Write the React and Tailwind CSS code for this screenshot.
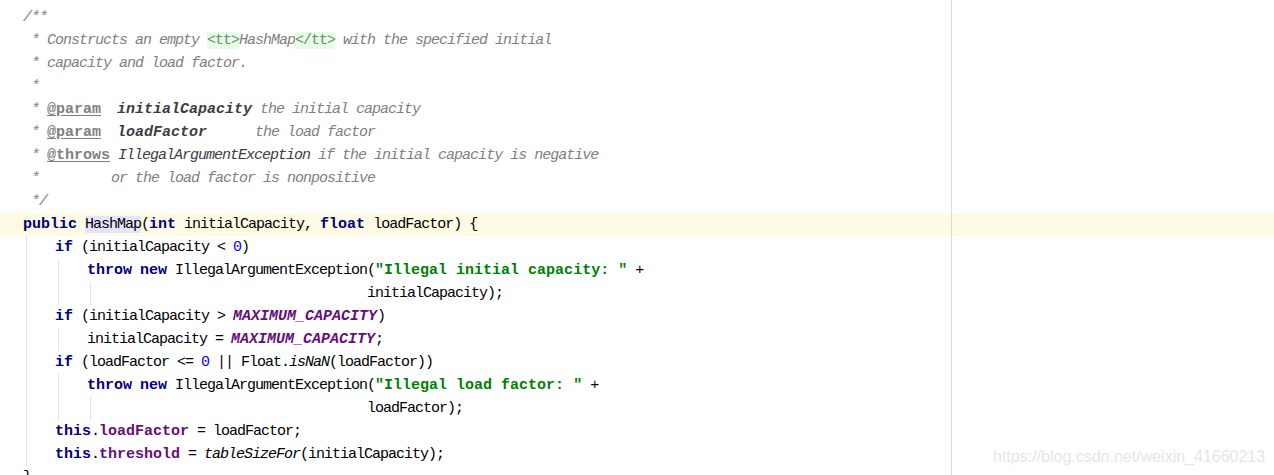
import React from 'react';

// token styles, IntelliJ default light scheme
const kw = 'font-bold tracking-[0px] text-[#000080]';
const str = 'font-bold tracking-[0px] text-[#008000]';
const num = 'text-[#0000ff]';
const konst = 'font-bold italic tracking-[0px] text-[#660e7a]';
const field = 'font-bold tracking-[0px] text-[#660e7a]';
const it = 'italic';
const cm = 'italic text-[#808080]';
const tag = 'font-bold tracking-[0px] underline underline-offset-2 text-[#808080]';
const tagVal = 'font-bold italic tracking-[0px] text-[#3d3d3d]';
const tagRef = 'italic text-[#3d3d3d]';
const markup = 'text-[#808080] bg-[#e2ffe2]';
const usage = 'bg-[#e4e4ff]';

const lines = [
  { toks: [['/**', cm]] },
  { toks: [[' * Constructs an empty ', cm], ['<tt>', markup], ['HashMap', cm], ['</tt>', markup], [' with the specified initial', cm]] },
  { toks: [[' * capacity and load factor.', cm]] },
  { toks: [[' *', cm]] },
  { toks: [[' * ', cm], ['@param', tag], ['  ', cm], ['initialCapacity', tagVal], [' the initial capacity', cm]] },
  { toks: [[' * ', cm], ['@param', tag], ['  ', cm], ['loadFactor', tagVal], ['      the load factor', cm]] },
  { toks: [[' * ', cm], ['@throws', tag], [' ', cm], ['IllegalArgumentException', tagRef], [' if the initial capacity is negative', cm]] },
  { toks: [[' *         or the load factor is nonpositive', cm]] },
  { toks: [[' */', cm]] },
  { current: true, toks: [['public', kw], [' '], ['HashMap', usage], ['('], ['int', kw], [' initialCapacity, '], ['float', kw], [' loadFactor) {']] },
  { guides: 1, toks: [['if', kw], [' (initialCapacity < '], ['0', num], [')']] },
  { guides: 2, toks: [['throw', kw], [' '], ['new', kw], [' IllegalArgumentException('], ['"Illegal initial capacity: "', str], [' +']] },
  { guides: 3, pad: 31, toks: [['initialCapacity);']] },
  { guides: 1, toks: [['if', kw], [' (initialCapacity > '], ['MAXIMUM_CAPACITY', konst], [')']] },
  { guides: 2, toks: [['initialCapacity = '], ['MAXIMUM_CAPACITY', konst], [';']] },
  { guides: 1, toks: [['if', kw], [' (loadFactor <= '], ['0', num], [' || Float.'], ['isNaN', it], ['(loadFactor))']] },
  { guides: 2, toks: [['throw', kw], [' '], ['new', kw], [' IllegalArgumentException('], ['"Illegal load factor: "', str], [' +']] },
  { guides: 3, pad: 31, toks: [['loadFactor);']] },
  { guides: 1, toks: [['this', kw], ['.'], ['loadFactor', field], [' = loadFactor;']] },
  { guides: 1, toks: [['this', kw], ['.'], ['threshold', field], [' = '], ['tableSizeFor', it], ['(initialCapacity);']] },
  { toks: [['}']] },
];

function Guide() {
  return (
    <span className="inline-block w-[32px] h-[23px] align-top pl-[3px]">
      <span className="block h-full border-l border-[#e4e4e4]" />
    </span>
  );
}

function Line({ line }) {
  const guides = Array.from({ length: line.guides || 0 });
  return (
    <div className={`h-[23px] leading-[23px] pl-[23px] whitespace-pre ${line.current ? 'bg-[#fffae3]' : ''}`}>
      {guides.map((_, i) => <Guide key={i} />)}
      {line.pad ? ' '.repeat(line.pad) : null}
      {line.toks.map(([text, cls], i) => (
        <span key={i} className={cls || ''}>{text}</span>
      ))}
    </div>
  );
}

export default function App() {
  return (
    <div className="relative w-[1274px] h-[475px] overflow-hidden bg-white text-black">
      <div className="pt-[6px] text-[15px] tracking-[-1px] font-['Liberation_Mono',monospace]">
        {lines.map((l, i) => <Line key={i} line={l} />)}
      </div>

      {/* right margin */}
      <div className="absolute left-[951px] top-0 bottom-0 w-px bg-[#dadada]" />

      {/* watermark */}
      <div className="absolute left-[993px] top-[446px] leading-[22px] text-[16px] text-[#e6e6e6] font-['Liberation_Sans',sans-serif]">
        https://blog.csdn.net/weixin_41660213
      </div>
    </div>
  );
}
